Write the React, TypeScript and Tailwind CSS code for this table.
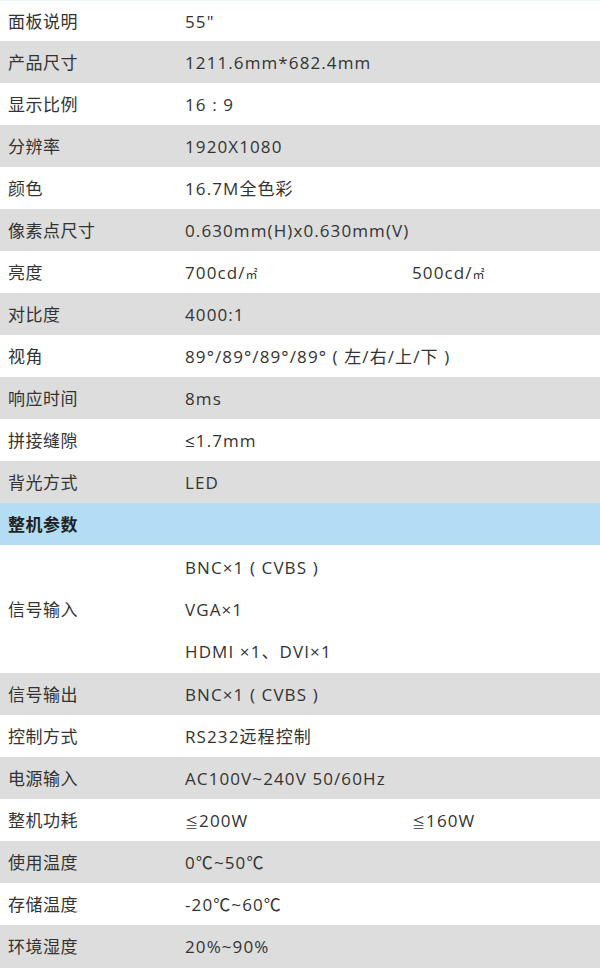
const font = "font-['Open_Sans','Noto_Sans_CJK_SC',sans-serif]";

type Row = { label: string; value: React.ReactNode; value2?: React.ReactNode };

const top: Row[] = [
  { label: "产品尺寸", value: "1211.6mm*682.4mm" },
  { label: "显示比例", value: "16 : 9" },
  { label: "分辨率", value: "1920X1080" },
  { label: "颜色", value: "16.7M全色彩" },
  { label: "像素点尺寸", value: "0.630mm(H)x0.630mm(V)" },
  {
    label: "亮度",
    value: (
      <>
        700cd/<span className="text-[12px] tracking-normal">㎡</span>
      </>
    ),
    value2: (
      <>
        500cd/<span className="text-[12px] tracking-normal">㎡</span>
      </>
    ),
  },
  { label: "对比度", value: "4000:1" },
  { label: "视角", value: "89°/89°/89°/89° ( 左/右/上/下 )" },
  { label: "响应时间", value: "8ms" },
  { label: "拼接缝隙", value: "≤1.7mm" },
  { label: "背光方式", value: "LED" },
];

const bottom: Row[] = [
  { label: "信号输出", value: "BNC×1 ( CVBS )" },
  { label: "控制方式", value: "RS232远程控制" },
  { label: "电源输入", value: "AC100V~240V 50/60Hz" },
  {
    label: "整机功耗",
    value: (
      <>
        <span className="text-[13px]">≦</span>200W
      </>
    ),
    value2: (
      <>
        <span className="text-[13px]">≦</span>160W
      </>
    ),
  },
  { label: "使用温度", value: "0℃~50℃" },
  { label: "存储温度", value: "-20℃~60℃" },
  { label: "环境湿度", value: "20%~90%" },
];

function SpecRow({ row, gray, h = "h-[42px]" }: { row: Row; gray: boolean; h?: string }) {
  return (
    <div className={`flex items-center whitespace-nowrap ${h} ${gray ? "bg-[#dddddd]" : "bg-white"}`}>
      <div className="w-[185px] shrink-0 pl-[8px] tracking-[0.5px]">{row.label}</div>
      <div className={`tracking-[1.1px] ${row.value2 ? "w-[227px] shrink-0" : "flex-1"}`}>{row.value}</div>
      {row.value2 && <div className="tracking-[1.1px]">{row.value2}</div>}
    </div>
  );
}

export default function App() {
  return (
    <div className={`w-[600px] h-[968px] bg-white text-[#333333] text-[17px] leading-none ${font}`}>
      <SpecRow row={{ label: "面板说明", value: '55"' }} gray={false} h="h-[41px] border-t border-[#eaf6fa]" />
      {top.map((r, i) => (
        <SpecRow key={r.label} row={r} gray={i % 2 === 0} />
      ))}
      <div className="flex items-center h-[42px] bg-[#b3ddf4] pl-[8px] font-bold text-[#222222] tracking-[0.5px]">
        整机参数
      </div>
      <div className="flex items-center h-[128px] bg-white whitespace-nowrap">
        <div className="w-[185px] shrink-0 pl-[8px] tracking-[0.5px]">信号输入</div>
        <div className="flex flex-col tracking-[1.1px]">
          <div className="h-[42px] flex items-center">BNC×1 ( CVBS )</div>
          <div className="h-[42px] flex items-center">VGA×1</div>
          <div className="h-[42px] flex items-center">HDMI ×1、DVI×1</div>
        </div>
      </div>
      {bottom.map((r, i) => (
        <SpecRow key={r.label} row={r} gray={i % 2 === 0} h={i === bottom.length - 1 ? "h-[43px]" : "h-[42px]"} />
      ))}
    </div>
  );
}
